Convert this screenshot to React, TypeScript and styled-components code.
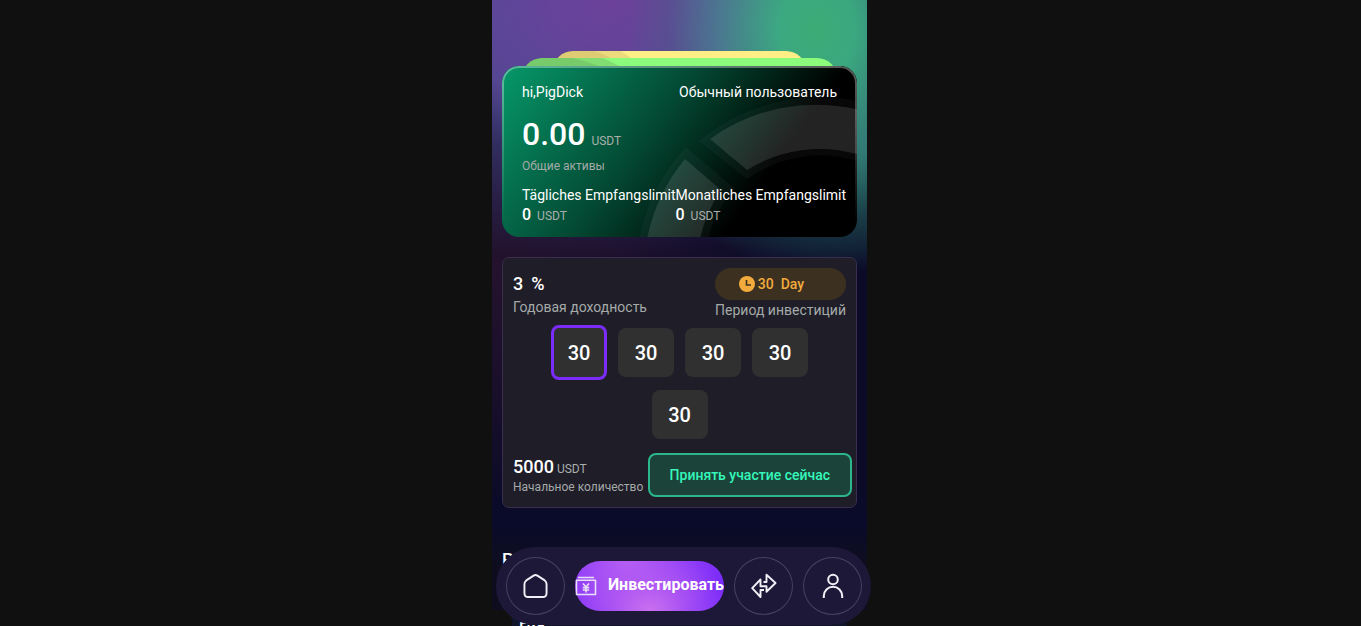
import React, { useState } from 'react';
import styled, { createGlobalStyle, css } from 'styled-components';

const GlobalStyle = createGlobalStyle`
  *, *::before, *::after { box-sizing: border-box; }
  html, body { margin: 0; background: #101010; }
  body { font-family: Roboto, "Liberation Sans", sans-serif; color: #fff; }
  button { font: inherit; color: inherit; border: 0; padding: 0; cursor: pointer; }
  p, h1, h2 { margin: 0; font-weight: 400; }
`;

const Page = styled.div`
  display: flex;
  justify-content: center;
  height: 100vh;
  padding-right: 2px;
  overflow: hidden;
`;

const Phone = styled.main`
  position: relative;
  width: 100%;
  max-width: 375px;
`;

const Backdrop = styled.div`
  padding: 51px 10px 0;
  height: 610px;
  background:
    radial-gradient(ellipse 190px 250px at 325px 30px, #3cab74 0%, rgba(60, 174, 130, 0.95) 20%, rgba(62, 160, 140, 0.55) 52%, rgba(50, 120, 120, 0.2) 78%, transparent 100%),
    radial-gradient(ellipse 190px 150px at 120px 0, rgba(112, 62, 152, 0.8) 0%, rgba(108, 64, 154, 0.4) 55%, transparent 100%),
    radial-gradient(ellipse 420px 260px at 100px 0, #5b4b9f 0%, rgba(88, 78, 156, 0.9) 38%, rgba(66, 66, 130, 0.6) 60%, transparent 100%),
    radial-gradient(ellipse 240px 120px at 375px 150px, rgba(38, 120, 98, 0.7), transparent),
    radial-gradient(ellipse 300px 230px at 0 270px, #24122e 0%, rgba(32, 17, 44, 0.7) 50%, transparent 100%),
    linear-gradient(#0b0b28 80%, #0a0b2a 86%, #0e0d20 92%);
`;

const Stack = styled.div`
  display: flex;
  flex-direction: column;
  align-items: center;
`;

const Layer = styled.div<{ $tone: 'yellow' | 'green' }>`
  height: 32px;
  border-radius: 20px 20px 0 0;
  ${({ $tone }) =>
    $tone === 'yellow'
      ? css`
          width: 253px;
          margin-bottom: -25px;
          background: radial-gradient(circle at 12px 92px, #dfcb73 96px, #ecda7c 97px 107px, #ffee85 108px);
        `
      : css`
          width: 315px;
          margin-bottom: -24px;
          background: radial-gradient(circle at 18px 150px, #78cb6a 153px, #82de72 154px 162px, #8cfb7b 163px);
        `}
`;

const Card = styled.section`
  position: relative;
  z-index: 1;
  width: 100%;
  height: 171px;
  padding: 17px 20px 0;
  border-radius: 17px;
  overflow: hidden;
  background: linear-gradient(127deg, #06996a 0%, #034832 41%, #000 72%);

  &::after {
    content: '';
    position: absolute;
    inset: 0;
    border: 2px solid rgba(255, 255, 255, 0.34);
    border-radius: 17px;
    mask-image: linear-gradient(#000 10%, transparent 92%);
    pointer-events: none;
  }
`;

const Ring = styled.svg`
  position: absolute;
  z-index: -1;
  inset: 0;
  width: 355px;
  height: 171px;
`;

const Spread = styled.div`
  display: flex;
  justify-content: space-between;
  font-size: 14px;
  line-height: 18px;
`;

const Balance = styled.p`
  display: flex;
  align-items: baseline;
  gap: 6px;
  margin: 14px 0 -3px;
  font-size: 32px;
  font-weight: 500;
  line-height: 38px;
`;

const Unit = styled.span`
  font-size: 12px;
  font-weight: 400;
  color: #a9afac;
`;

const Caption = styled.p<{ $size?: number }>`
  font-size: ${({ $size = 12 }) => $size}px;
  line-height: 18px;
  color: #a4aaa8;
  white-space: nowrap;
`;

const Limits = styled.div`
  display: flex;
  margin-top: 10px;
  font-size: 14px;
  line-height: 20px;
  white-space: nowrap;
`;

const LimitValue = styled.p`
  display: flex;
  align-items: baseline;
  gap: 6px;
  font-size: 16px;
  font-weight: 500;
`;

const Plan = styled.section`
  margin-top: 20px;
  height: 251px;
  padding: 10px 10px 0;
  border: 1px solid #3a2d4d;
  border-radius: 7px;
  background: #1f1d28;
`;

const PlanHead = styled.div`
  display: flex;
  justify-content: space-between;
`;

const Rate = styled.p`
  display: flex;
  gap: 8px;
  margin: 5px 0 3px;
  font-size: 18px;
  font-weight: 500;
  line-height: 22px;
`;

const Period = styled.div`
  display: flex;
  align-items: center;
  justify-content: center;
  gap: 3px;
  height: 32px;
  margin-bottom: 1px;
  padding-right: 18px;
  border-radius: 16px;
  background: #3c3021;
  color: #f2ab3c;
  font-size: 14px;
  font-weight: 500;
  white-space: pre;
`;

const Options = styled.div`
  display: flex;
  flex-wrap: wrap;
  justify-content: center;
  align-items: center;
  gap: 10px 11px;
  width: 300px;
  margin: 6px auto 0;
`;

const Option = styled.button<{ $active: boolean }>`
  width: 56px;
  height: ${({ $active }) => ($active ? 55 : 49)}px;
  border-radius: 8px;
  background: #303031;
  font-size: 20px;
  font-weight: 500;
  ${({ $active }) => $active && 'border: 3px solid #7c2cf9;'}
`;

const PlanFoot = styled.div`
  display: flex;
  justify-content: space-between;
  align-items: center;
  margin: 14px -6px 0 0;
`;

const Minimum = styled.p`
  display: flex;
  align-items: baseline;
  gap: 3px;
  padding-top: 4px;
  font-size: 18px;
  font-weight: 500;
  line-height: 18px;
`;

const Join = styled.button`
  flex: none;
  height: 44px;
  padding: 0 20px;
  border: 2px solid #2bb68c;
  border-radius: 8px;
  background: #1b4339;
  color: #35f7b9;
  font-size: 14px;
  font-weight: 500;
  white-space: nowrap;
`;

const Heading = styled.h2`
  margin-top: 40px;
  font-size: 18px;
  font-weight: 500;
  line-height: 24px;
`;

const News = styled.article`
  margin: 0 20px;
  padding: 9px 7px;
  background: #10152a;
  font-size: 16px;
  font-weight: 500;
  line-height: 20px;
`;

const NavBar = styled.nav`
  position: absolute;
  z-index: 2;
  left: 4px;
  top: 547px;
  display: flex;
  align-items: center;
  gap: 10px;
  width: 100%;
  height: 78px;
  padding: 0 9px 0 10px;
  border-radius: 39px;
  background: #1d1838;
`;

const RoundTab = styled.button`
  display: grid;
  place-items: center;
  flex: none;
  width: 59px;
  height: 58px;
  border: 1px solid #48425f;
  border-radius: 50%;
  background: none;
`;

const ActiveTab = styled.button`
  display: flex;
  align-items: center;
  justify-content: space-between;
  flex: 1;
  min-width: 0;
  height: 50px;
  border-radius: 25px;
  background:
    radial-gradient(ellipse 80px 60px at 50% 100%, #cb70ef 0%, rgba(190, 100, 240, 0.6) 45%, transparent 100%),
    radial-gradient(ellipse 95px 70px at 35% 0, #b45df4 0%, rgba(170, 84, 245, 0.8) 35%, transparent 100%),
    #7c2cf9;
  font-size: 16px;
  font-weight: 700;
`;

const ActiveLabel = styled.span`
  padding-bottom: 4px;
`;

const Line = styled.svg<{ $weight?: number }>`
  display: block;
  fill: none;
  stroke: #f1eff6;
  stroke-width: ${({ $weight = 2 }) => $weight};
  stroke-linejoin: round;
`;

const limits = [
  { label: 'Tägliches Empfangslimit', value: 0 },
  { label: 'Monatliches Empfangslimit', value: 0 },
];

const terms = [30, 30, 30, 30, 30];

export default function App() {
  const [selected, setSelected] = useState(0);

  return (
    <Page>
      <GlobalStyle />
      <Phone>
        <Backdrop>
          <Stack>
            <Layer $tone="yellow" />
            <Layer $tone="green" />
            <Card>
              <Ring viewBox="0 -2 355 171" fill="#fff" aria-hidden="true">
                <g fillOpacity=".03">
                  <path d="M197 73 A192 192 0 0 1 358 33 V94 A127 127 0 0 0 245 111 Z" />
                  <path d="M137 171 A192 192 0 0 1 184 79 L232 120 A127 127 0 0 0 206 171 Z" />
                </g>
                <g fillOpacity=".11">
                  <path d="M208 71 A182 182 0 0 1 358 42 V87 A137 137 0 0 0 245 102 Z" />
                  <path d="M145 171 A182 182 0 0 1 183 91 L219 122 A137 137 0 0 0 198 171 Z" />
                </g>
              </Ring>
              <Spread>
                <span>hi,PigDick</span>
                <span>Обычный пользователь</span>
              </Spread>
              <Balance>
                0.00 <Unit>USDT</Unit>
              </Balance>
              <Caption>Общие активы</Caption>
              <Limits>
                {limits.map((limit) => (
                  <div key={limit.label}>
                    <p>{limit.label}</p>
                    <LimitValue>
                      {limit.value} <Unit>USDT</Unit>
                    </LimitValue>
                  </div>
                ))}
              </Limits>
            </Card>
          </Stack>

          <Plan>
            <PlanHead>
              <div>
                <Rate>
                  <span>3</span>
                  <span>%</span>
                </Rate>
                <Caption $size={14}>Годовая доходность</Caption>
              </div>
              <div>
                <Period>
                  <svg width="16" height="16" viewBox="0 0 16 16" aria-hidden="true">
                    <circle cx="8" cy="8" r="8" fill="#f2ab3c" />
                    <path d="M7.5 4v5H12" fill="none" stroke="#3c3021" strokeWidth="1.6" />
                  </svg>
                  {'30  Day'}
                </Period>
                <Caption $size={14}>Период инвестиций</Caption>
              </div>
            </PlanHead>
            <Options>
              {terms.map((days, i) => (
                <Option key={i} $active={i === selected} onClick={() => setSelected(i)}>
                  {days}
                </Option>
              ))}
            </Options>
            <PlanFoot>
              <div>
                <Minimum>
                  5000 <Unit>USDT</Unit>
                </Minimum>
                <Caption>Начальное количество</Caption>
              </div>
              <Join>Принять участие сейчас</Join>
            </PlanFoot>
          </Plan>

          <Heading>Рынок</Heading>
        </Backdrop>
        <News>Гид</News>

        <NavBar>
          <RoundTab aria-label="Home">
            <Line width="25" height="26" viewBox="0 0 26 26">
              <path d="M11 2.2 L3.4 7.2 Q1.5 8.6 1.5 10.8 V20.5 Q1.5 24.5 5.5 24.5 H20.5 Q24.5 24.5 24.5 20.5 V10.8 Q24.5 8.6 22.6 7.2 L15 2.2 Q13 .9 11 2.2 Z" />
            </Line>
          </RoundTab>
          <ActiveTab>
            <Line $weight={1.6} width="22" height="20" viewBox="0 0 22 20" opacity=".9">
              <path d="M3 1.5h16M1.5 4.2h19v14.3h-19zM8 7.5l3 3.5 3-3.5M11 11v5.5M7.8 11.6h6.4M7.8 14h6.4" />
            </Line>
            <ActiveLabel>Инвестировать</ActiveLabel>
          </ActiveTab>
          <RoundTab aria-label="Transfer">
            <Line $weight={1.9} width="26" height="26" viewBox="0 0 26 26">
              <path d="M12.5 9 H15.5 V1.8 L24.5 10 L15.5 18.8 V13.2 H9.5 V6.5 L1.2 15.2 L9.5 24 V17 H13" />
            </Line>
          </RoundTab>
          <RoundTab aria-label="Profile">
            <Line width="22" height="26" viewBox="0 0 22 26">
              <circle cx="11" cy="6.5" r="4.8" />
              <path d="M1.8 25 V23 A9.2 9.2 0 0 1 20.2 23 V25" />
            </Line>
          </RoundTab>
        </NavBar>
      </Phone>
    </Page>
  );
}
